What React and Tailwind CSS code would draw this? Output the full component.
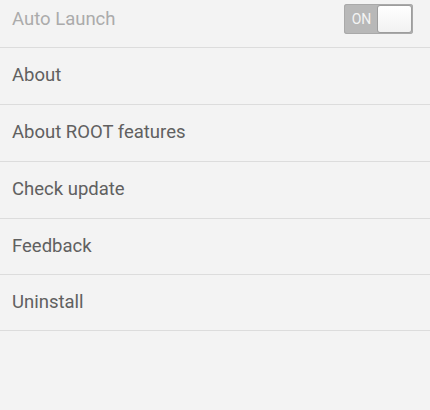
import React, { useState } from "react";

const items = ["About", "About ROOT features", "Check update", "Feedback", "Uninstall"];

const Toggle = ({ on, onToggle }) => (
  <button
    onClick={onToggle}
    className="flex h-[30px] w-[69px] items-center rounded-[3px] bg-[#b8b8b8] p-[1px] shadow-[inset_0_0_0_1px_#a9a9a9]"
  >
    <span className="flex-1 pl-[1px] text-[14px] leading-none text-[#f4f4f4]">{on ? "ON" : ""}</span>
    <span className="h-[28px] w-[35px] rounded-[3px] border border-[#9d9d9d] bg-gradient-to-b from-white to-[#f2f2f2]" />
  </button>
);

export default function App() {
  const [autoLaunch, setAutoLaunch] = useState(true);

  return (
    <div
      className="h-[410px] w-[430px] overflow-hidden bg-[#f3f3f3]"
      style={{ fontFamily: "Roboto, 'Noto Sans', sans-serif" }}
    >
      <div className="-mt-[9px]">
        <div className="flex h-[57px] items-end justify-between border-b border-[#dcdcdc] pb-[13px] pl-[12px] pr-[17px]">
          <span className="text-[18.5px] text-[#ababab]">Auto Launch</span>
          <Toggle on={autoLaunch} onToggle={() => setAutoLaunch(!autoLaunch)} />
        </div>
        {items.map((label, i) => (
          <div
            key={label}
            className={
              i < 3
                ? "flex h-[57px] items-center border-b border-[#dcdcdc] pl-[12px] text-[18.5px] text-[#606060]"
                : "flex h-[56px] items-center border-b border-[#dcdcdc] pl-[12px] text-[18.5px] text-[#606060]"
            }
          >
            {label}
          </div>
        ))}
      </div>
    </div>
  );
}
